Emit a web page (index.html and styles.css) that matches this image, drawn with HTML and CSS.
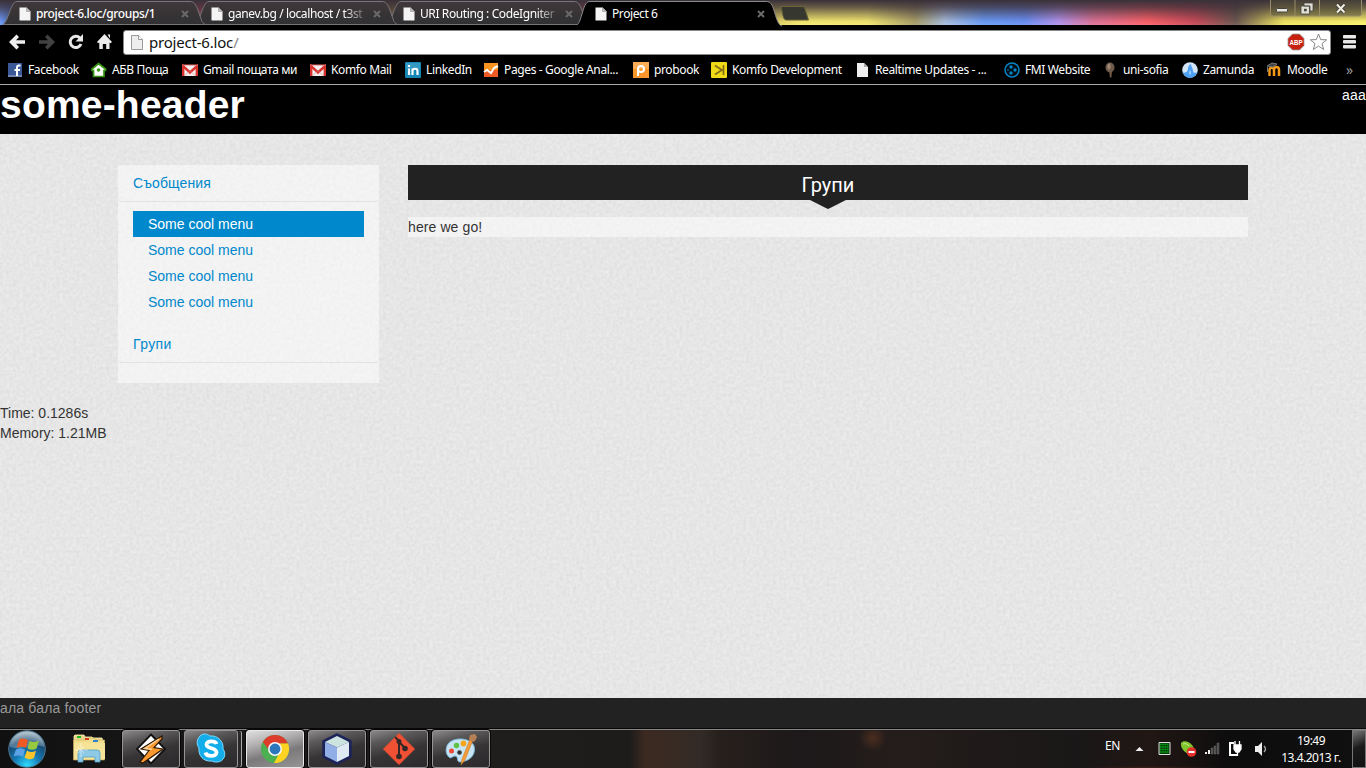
FILE: index.html
```html
<!DOCTYPE html>
<html lang="bg">
<head>
<meta charset="utf-8">
<title>Project 6</title>
<link rel="stylesheet" href="styles.css">
</head>
<body>
<svg class="defs" width="0" height="0">
  <defs>
    <symbol id="doc" viewBox="0 0 12 14"><path d="M.5.5h7l4 4v9H.5z" fill="#f4f4f4"/><path d="M7.500.5v4h4z" fill="#bbb" stroke="#999" stroke-width=".6"/></symbol>
    <symbol id="close" viewBox="0 0 8 8"><path d="M1 1l6 6M7 1L1 7" stroke="#6a6a6a" stroke-width="2"/></symbol>
    <symbol id="gmail" viewBox="0 0 16 16"><path d="M0 3h16v11H0z" fill="#f5eeee"/><path d="M1.200 14V4.200L8 10.500l6.800-6.300V14" fill="none" stroke="#d8322f" stroke-width="2.400"/><path d="M3 13.500l4-4M13 13.500l-4-4" stroke="#d9a5a2" stroke-width=".8"/><path d="M0 3h16" stroke="#e46a66"/></symbol>
  </defs>
</svg>

<div class="browser">
  <div class="tabstrip">
    <svg class="strip-art" width="1366" height="28" viewBox="0 0 1366 28">
      <defs>
        <linearGradient id="glow" x2="1366" gradientUnits="userSpaceOnUse">
          <stop offset="0" stop-color="#6f9dff"/><stop offset=".01" stop-color="#4060a0"/><stop offset=".08" stop-color="#503050"/><stop offset=".147" stop-color="#b04a58"/><stop offset=".2" stop-color="#604040"/><stop offset=".286" stop-color="#8a7a40"/><stop offset=".36" stop-color="#503840"/><stop offset=".43" stop-color="#b04858"/><stop offset=".5" stop-color="#806840"/><stop offset=".585" stop-color="#f8ec70"/><stop offset=".635" stop-color="#f5e870"/><stop offset=".67" stop-color="#a89e68"/><stop offset=".692" stop-color="#a9bfe0"/><stop offset=".72" stop-color="#6a9cf8"/><stop offset=".75" stop-color="#6a90f8"/><stop offset=".775" stop-color="#b394ee"/><stop offset=".8" stop-color="#e0749a"/><stop offset=".84" stop-color="#ff6068"/><stop offset=".875" stop-color="#c84a58"/><stop offset=".905" stop-color="#6c5850"/><stop offset=".94" stop-color="#f4e860"/><stop offset="1" stop-color="#fff56c"/>
        </linearGradient>
        <linearGradient id="shade" x2="0" y2="1"><stop stop-color="#3b3038" stop-opacity="1"/><stop offset=".3" stop-color="#3b3038" stop-opacity=".75"/><stop offset=".85" stop-color="#3b3038" stop-opacity=".05"/><stop offset="1" stop-color="#fff" stop-opacity=".08"/></linearGradient>
        <linearGradient id="tabfill" x2="0" y2="1"><stop stop-color="#40383a"/><stop offset="1" stop-color="#303032"/></linearGradient>
      </defs>
      <path d="M0 0h1366v25H0z" fill="url(#glow)"/>
      <path d="M0 0h1366v25H0z" fill="url(#shade)"/>
      <path d="M0 25h1366v3H0z" fill="#000"/>
      <g fill="url(#tabfill)" stroke="#77747a">
        <path d="M387 24.500c3-2 4-6 6-11s4-12 8-12H574c4 0 6 3 8 9l4 11 3 3z"/>
        <path d="M195 24.500c3-2 4-6 6-11s4-12 8-12H382c4 0 6 3 8 9l4 11 3 3z"/>
        <path d="M3 24.500c3-2 4-6 6-11s4-12 8-12H190c4 0 6 3 8 9l4 11 3 3z"/>
      </g>
      <path d="M575 26c4-1 5-6 7-12 2-6 3-12.500 8-12.500H766c5 0 6 3 8 9s4 15 8 15.500" fill="#000" stroke="#8a878a"/>
      <path d="M0 25h577v3H0z" fill="#000"/>
      <path d="M781 6.500h21c2 0 2.500 1 3.500 4l3 9.500h-22c-2 0-2.500-1-3.500-4z" fill="#36372f" stroke="#6b6338"/>
      <path d="M0 .5h1366" stroke="#39333a"/>
      <path d="M1270.500 0v13c0 2 1 3 3 3h85c2 0 3-1 3-3V0M1295 0v16M1319.500 0v16" fill="#504b38" fill-opacity=".5" stroke="#998d68" stroke-width="1"/>
      <rect x="1276.500" y="8.500" width="11" height="3.500" rx="1" fill="#ece9dc" stroke="#444"/>
      <path d="M1304 3h9v8h-3V6h-6zM1301 6h8.500v8h-8.500z" fill="#e2dfd2" stroke="#444" stroke-width=".8"/><path d="M1304 8.800h2.700v2.500h-2.700z" fill="#444"/>
      <path d="M1337 4.500l7.500 8M1344.500 4.500l-7.500 8" stroke="#333" stroke-width="4"/><path d="M1337 4.500l7.500 8M1344.500 4.500l-7.500 8" stroke="#eeeadd" stroke-width="2.200"/>
    </svg>
    <div class="tabs">
      <div class="tab"><svg class="doc"><use href="#doc"/></svg><span class="tab-title first">project-6.loc/groups/1</span><svg class="x"><use href="#close"/></svg></div>
      <div class="tab"><svg class="doc"><use href="#doc"/></svg><span class="tab-title fade">ganev.bg / localhost / t3st</span><svg class="x"><use href="#close"/></svg></div>
      <div class="tab"><svg class="doc"><use href="#doc"/></svg><span class="tab-title fade">URI Routing : CodeIgniter</span><svg class="x"><use href="#close"/></svg></div>
      <div class="tab"><svg class="doc"><use href="#doc"/></svg><span class="tab-title">Project 6</span><svg class="x"><use href="#close"/></svg></div>
    </div>
  </div>

  <div class="toolbar">
    <svg class="nav" width="123" height="30" viewBox="0 28 123 30">
      <path d="M9 43l7.500-7.500 2.500 2.500-3 3.200H25v3.600h-9l3 3.200-2.500 2.500z" fill="#eee"/>
      <path d="M55 43l-7.500-7.500L45 38l3 3.200h-9v3.600h9L45 48l2.500 2.500z" fill="#414141"/>
      <path d="M80 39.200A5.600 5.600 0 1 0 81 45" fill="none" stroke="#e8e8e8" stroke-width="3"/><path d="M83 35v7.500h-7.500z" fill="#e8e8e8"/>
      <path d="M104.500 35l7.500 8-1.500 1.200-1-.8V50h-3.300v-5h-3.400v5h-3.500v-6.600l-1 .8L97 43zM107.500 35.500h2.500v4z" fill="#eee"/>
    </svg>
    <div class="omnibox">
      <svg class="page" width="12" height="15" viewBox="0 0 12 15"><path d="M.5.500h7l4 4v10H.5z" fill="#eee" stroke="#999"/><path d="M7.500.500v4h4" fill="#fff" stroke="#999"/></svg>
      <span class="url">project-6.loc<i>/</i></span>
      <svg class="omni-icons" width="41" height="20" viewBox="0 0 41 20"><path d="M5.500 2h7L17 6.500v7L12.500 18h-7L1 13.500v-7z" fill="#c8200f" stroke="#999" stroke-width=".8"/><text x="2.500" y="13" class="abp" textLength="13" lengthAdjust="spacingAndGlyphs">ABP</text><path d="M31.500 2l2.200 5.600 6 .2-4.700 3.800 1.700 5.900-5.200-3.400-5.200 3.400 1.700-5.900-4.700-3.800 6-.2z" fill="#fff" stroke="#888"/></svg>
    </div>
    <svg class="menu" width="14" height="14" viewBox="0 0 14 14"><g fill="#e8e8e8"><rect width="13" height="3.600" rx="1"/><rect y="5" width="13" height="3.600" rx="1"/><rect y="10" width="13" height="3.600" rx="1"/></g></svg>
  </div>

  <div class="bookmarks">
    <div class="bm"><svg viewBox="0 0 16 16"><path d="M0 1h14v14H0z" fill="#3b5998"/><path d="M0 13h14v2H0z" fill="#6d84b4"/><path d="M12.500 3.500H11c-1.500 0-2 1-2 2V14M6.500 8h5.500" fill="none" stroke="#fff" stroke-width="2"/></svg><span>Facebook</span></div>
    <div class="bm"><svg viewBox="0 0 16 16"><path d="M7.500 1.500L14.500 7v1.500H13V14.500H2.500V8.500H1V7z" fill="#fff" stroke="#35930f" stroke-width="1.700"/><circle cx="7.500" cy="8" r="1.800" fill="#3a9e18"/></svg><span>АБВ Поща</span></div>
    <div class="bm"><svg><use href="#gmail"/></svg><span>Gmail пощата ми</span></div>
    <div class="bm"><svg><use href="#gmail"/></svg><span>Komfo Mail</span></div>
    <div class="bm"><svg viewBox="0 0 16 16"><rect width="16" height="16" rx="1" fill="#1686b4"/><path d="M1 1h14v6H1z" fill="#50acd0" opacity=".5"/><path d="M4 6.500V13M4 3v2M7.500 13V6.500M7.500 9c.3-3 5-3 5 0v4" fill="none" stroke="#fff" stroke-width="2.200"/></svg><span>LinkedIn</span></div>
    <div class="bm"><svg viewBox="0 0 16 16"><path d="M1 1h14v7H1z" fill="#f7931e"/><path d="M1 8h14v7H1z" fill="#f05a24"/><path d="M1 10l3-2 4 3 3-5 4-2" stroke="#fff" stroke-width="2" fill="none"/></svg><span>Pages - Google Anal...</span></div>
    <div class="bm"><svg viewBox="0 0 16 16"><path d="M0 0h16v16H0z" fill="#f9972d"/><path d="M0 0h16v7H0z" fill="#ffc27b" opacity=".5"/><circle cx="8" cy="7" r="3" fill="none" stroke="#fff" stroke-width="2"/><path d="M5 7v7" stroke="#fff" stroke-width="2"/></svg><span>probook</span></div>
    <div class="bm"><svg viewBox="0 0 16 16"><rect width="16" height="16" rx="1" fill="#f0d916"/><path d="M12.500 3v10M4 3.500L11 8l-7 4.500" fill="none" stroke="#806b16" stroke-width="1.700"/></svg><span>Komfo Development</span></div>
    <div class="bm"><svg viewBox="-3 -1 16 16"><path d="M0 0h7l4 4v10H0z" fill="#eee"/><path d="M7 0v4h4z" fill="#aaa"/></svg><span>Realtime Updates - ...</span></div>
    <div class="bm"><svg viewBox="0 0 16 16"><circle cx="8" cy="8" r="7" fill="#020d15" stroke="#0785c4" stroke-width="1.500"/><g fill="#0785c4"><circle cx="7" cy="5" r="1.700"/><circle cx="11" cy="8" r="1.700"/><circle cx="7" cy="11" r="1.700"/><circle cx="4" cy="8" r=".8"/></g></svg><span>FMI Website</span></div>
    <div class="bm"><svg viewBox="0 0 16 16"><path d="M7 8h3l-.5 7-1.500 1z" fill="#715846"/><ellipse cx="8" cy="5.500" rx="4.500" ry="5" fill="#6f5b4c"/><ellipse cx="7" cy="4.500" rx="1.500" ry="3" fill="#a18b77"/></svg><span>uni-sofia</span></div>
    <div class="bm"><svg viewBox="0 0 16 16"><circle cx="8" cy="8" r="7.800" fill="#d3e5f8"/><path d="M.8 10C2 14 5 15.800 8 15.800s6-1.800 7.200-5.800c-2 1.500-4 1-4.200-1 0-3-2-4-2-7C5 4 7 7 5 9.500c-1 1.500-3 1.500-4.200.5z" fill="#4b9ff5"/><path d="M8 8c1.500 2 1.500 4 0 5-1.500-1-1.500-3 0-5z" fill="#9dcdff"/></svg><span>Zamunda</span></div>
    <div class="bm"><svg viewBox="0 0 16 16"><path d="M3.500 14V8c0-3 4.500-3 4.500 0v6M8 14V8c0-4 5-4 5 0v6" fill="none" stroke="#f29a18" stroke-width="2.500"/><path d="M1 4l5-3 5 1-4 3zM1.500 5v5" fill="#444" stroke="#777"/></svg><span>Moodle</span></div>
    <div class="more">»</div>
  </div>
</div>

<main class="page-body">
  <svg class="paper" width="1366" height="564"><filter id="grain" x="0" y="0" width="100%" height="100%" color-interpolation-filters="sRGB"><feTurbulence type="fractalNoise" baseFrequency=".3" numOctaves="3" seed="4"/><feColorMatrix values=".075 0 0 0 .864 .075 0 0 0 .864 .075 0 0 0 .864 0 0 0 0 1"/></filter><rect width="1366" height="564" filter="url(#grain)"/></svg>
  <header class="site-header"><h1>some-header</h1><span>aaa</span></header>
  <div class="columns">
    <nav class="sidebar">
      <a class="group">Съобщения</a>
      <ul><li class="active">Some cool menu</li><li>Some cool menu</li><li>Some cool menu</li><li>Some cool menu</li></ul>
      <a class="group">Групи</a>
    </nav>
    <section class="content">
      <h3>Групи</h3>
      <p>here we go!</p>
    </section>
  </div>
  <div class="stats">Time: 0.1286s<br>Memory: 1.21MB</div>
</main>
<footer class="site-footer">ала бала footer</footer>

<div class="taskbar">
  <svg class="start" width="48" height="38" viewBox="3 0 48 38">
    <defs><radialGradient id="orb" cx=".5" cy=".95" r=".9"><stop stop-color="#32dcff"/><stop offset=".4" stop-color="#1579b5"/><stop offset=".75" stop-color="#174a72"/><stop offset="1" stop-color="#9ab0bd"/></radialGradient></defs>
    <circle cx="30" cy="19" r="18.300" fill="url(#orb)" stroke="#4d768f"/><path d="M13 17a17 15 0 0 1 34 0c-11-5-22 4-34 0z" fill="#fff" opacity=".25"/>
    <path d="M22 9.500c3-2 6-1 9 .5l-2 8c-3-1.500-6-2-9.500 0z" fill="#ef5a24"/><path d="M32.500 11c3 1.500 6 1.500 9.500-.5l-2.500 8c-3 2-6 1.500-9 0z" fill="#97c93e"/><path d="M19 19.500c3-2 6-1.500 9 0L26 27c-3-2-6-2-9.500-.5z" fill="#5ba3e5"/><path d="M30 20.500c3.500 2 6 2 9 0L37 28c-4 2-6 1.500-9.500-.5z" fill="#fdc52c"/>
  </svg>
  <svg class="explorer" width="34" height="32" viewBox="0 0 34 32"><path d="M2 8V4l1-1h9l1 2h7l1 1h9l1 4z" fill="#e9d48a" stroke="#fff3b5" stroke-width=".8"/><path d="M1.500 8h13l2-2h6l1 2h9v20h-31z" fill="#f3de8c" stroke="#c9ae5d" stroke-width=".6"/><path d="M2 11h31v16H2z" fill="#f5e398"/><path d="M5 4h4v2H5z" fill="#16b824"/><path d="M13 6h4v2h-4z" fill="#d33a24"/><path d="M21 8h5v2h-5z" fill="#2d83ce"/><path d="M6 30V21q0-3 3-3h16q3 0 3 3v9h-5v-5H11v5z" fill="#8ecae6" stroke="#54a0c5" stroke-width=".8"/><path d="M9 11v14M3 18h13M6 15l6 6M12 15l-6 6" stroke="#fff" stroke-width=".8" opacity=".6"/></svg>
  <div class="apps">
    <div class="app"><svg viewBox="0 0 32 32"><path d="M16 1.500L30 16 16 30.500 2 16z" fill="#fff" stroke="#111" stroke-width="1.800"/><path d="M27 3L6 16l8 1.500L5 29l3 1 20-14-9-1.500L27 6z" fill="#f9982e" stroke="#2a1805" stroke-width="1.200"/><path d="M24 6L10 15.500l7 .8" fill="none" stroke="#ffd29b" stroke-width="1.500"/></svg></div>
    <div class="app stacked"><svg viewBox="0 0 32 32"><path d="M5 3c4-4 9-1 10 0 8-1 14 6 13 13 4 5 1 13-6 13-2 0-4 0-5-1C8 29 3 22 4 15 1 11 2 6 5 3z" fill="#13aeea" stroke="#7edaff"/><path d="M21.500 11c-1-3-10-4-10 .5 0 5 10 2.500 10 8 0 4.500-10 4.500-11 0" fill="none" stroke="#fff" stroke-width="3.800"/></svg></div>
    <div class="app current"><svg viewBox="0 0 32 32"><circle cx="16" cy="16" r="14" fill="#4caf50"/><path d="M3.900 9A14 14 0 0 1 29 10.500H16A6 6 0 0 0 10 17z" fill="#dd3b2b"/><path d="M29 10.500A14 14 0 0 1 15 30l6-11c2-3 0-6-2-8.500z" fill="#ffd321"/><circle cx="16" cy="16" r="6.200" fill="#2b76bd" stroke="#f5f5f5" stroke-width="1.600"/></svg></div>
    <div class="app"><svg viewBox="0 0 32 32"><path d="M16 1l14 7v16l-14 7-14-7V8z" fill="#1d2459" stroke="#1d2459" stroke-width="1.500" stroke-linejoin="round"/><path d="M16 3l12 6-12 5.500L4 9z" fill="#cce3df"/><path d="M4 9l12 5.500V29L4 23z" fill="#91aee6"/><path d="M28 9l-12 5.500V29l12-6z" fill="#dfeaf2"/></svg></div>
    <div class="app"><svg viewBox="0 0 32 32"><path d="M16 .5L31.500 16 16 31.500.5 16z" fill="#f05033" stroke="#f05033" stroke-linejoin="round"/><path d="M12 4l4 4v15M16 9l6 6" fill="none" stroke="#332827" stroke-width="2"/><circle cx="16" cy="8.500" r="2.500" fill="#332827"/><circle cx="16" cy="23.500" r="2.800" fill="#332827"/><circle cx="22" cy="15.500" r="2.800" fill="#332827"/></svg></div>
    <div class="app"><svg viewBox="0 0 32 32"><path d="M3 11C8 4 25 4 29 13c2 8-3 15-14 16-4 0-1-6-5-6-3 0-4 4-7 0-3-4-2-9 0-12z" fill="#c6e4f4" stroke="#7eb9da"/><circle cx="14.500" cy="19.500" r="2.300" fill="#333"/><circle cx="6.500" cy="18" r="2.500" fill="#ed4b37"/><circle cx="11.500" cy="12.500" r="2.700" fill="#5fc244"/><circle cx="18.500" cy="10.500" r="2.900" fill="#f9a51b"/><path d="M28 7l-8 20-4 5 1-6 8-20z" fill="#f49b38" stroke="#c87922" stroke-width=".5"/><path d="M24 6l1-4 5-1 2 3-2 4-3 1z" fill="#b58054"/></svg></div>
  </div>
  <div class="tray">
    <span class="lang">EN</span>
    <svg class="tray-icons" width="136" height="22" viewBox="1135 738 136 22">
      <path d="M1136.500 751l4-4 4 4z" fill="#eee"/>
      <path d="M1160 742.500h11v12h-11z" fill="#063d0a" stroke="#ddd"/><path d="M1161 744.500h9M1161 747h9M1161 749.500h9M1161 752h9" stroke="#08a018" stroke-width="1.700" stroke-dasharray="1.600 .6"/>
      <path d="M1182 743c2-3 8-2 11 2s3 9 1 10c-4 1-13-5-12-12z" fill="#80c62f"/><path d="M1184 744c2-1 5 0 6 2" stroke="#c9ee95" fill="none"/><circle cx="1192.500" cy="752" r="4.800" fill="#e4302b"/><path d="M1189.500 752h6" stroke="#fff" stroke-width="2"/>
      <path d="M1206 752h2v2h-2zM1209 750h2v4h-2z" fill="#eee"/><path d="M1212 748h2v6h-2zM1215 746h2v8h-2zM1218 743h2v11h-2z" fill="#4a4a4a" stroke="#777" stroke-width=".4"/>
      <path d="M1235 743h-4v12h8" fill="none" stroke="#fff" stroke-width="2"/><path d="M1235 745h7v4l-2 3h-3l-2-3zM1236 741v4M1240.500 741v4M1238.500 751v5" fill="#fff" stroke="#fff" stroke-width="1.300"/>
      <path d="M1256 746h3l4-4v14l-4-4h-3z" fill="#eee"/><path d="M1265 746q3 3 0 6" fill="none" stroke="#aaa" stroke-width="1.300"/>
    </svg>
    <div class="clock">19:49<br>13.4.2013 г.</div>
    <div class="peek"></div>
  </div>
</div>
</body>
</html>
```
FILE: styles.css
```css
* { box-sizing: border-box; }
body { margin: 0; width: 1366px; height: 768px; overflow: hidden; display: flex; flex-direction: column; font: 14px/20px "Liberation Sans", Arial, sans-serif; color: #333; background: #e6e6e6; }
svg { display: block; flex: none; }
.defs { position: absolute; }
.browser { height: 85px; flex: none; background: #000; color: #fff; border-bottom: 1px solid #aaa; font-family: "Noto Sans", sans-serif; display: flex; flex-direction: column; }
.tabstrip { position: relative; height: 28px; flex: none; }
.strip-art { position: absolute; left: 0; top: 0; }
.tabs { position: relative; display: flex; padding-left: 19px; height: 27px; }
.tab { width: 192px; display: flex; align-items: center; }
.doc { width: 12px; height: 14px; margin-right: 5px; }
.x { width: 8px; height: 8px; margin-left: 9px; }
.tab-title { width: 136px; overflow: hidden; white-space: nowrap; font-size: 12px; letter-spacing: -.4px; line-height: 18px; }
.first { font-weight: 500; letter-spacing: -.36px; }
.fade { -webkit-mask-image: linear-gradient(90deg, #000 85%, transparent 104%); mask-image: linear-gradient(90deg, #000 85%, transparent 104%); }
.toolbar { height: 28px; flex: none; display: flex; align-items: center; }
.omnibox { width: 1208px; height: 25px; background: #fff; border: 1px solid #888; border-radius: 3px; display: flex; align-items: center; padding: 0 2px 0 7px; }
.url { flex: 1; margin-left: 6px; color: #111; font-size: 15px; letter-spacing: -.2px; line-height: 20px; }
.url i { color: #888; font-style: normal; }
.abp { font: bold 8px "Liberation Sans", sans-serif; fill: #fff; }
.menu { margin-left: 12px; }
.bookmarks { flex: 1; display: grid; grid-template-columns: 83px 91px 128px 95px 78px 150px 78px 143px 150px 98px 80px 84px 80px 16px; padding-left: 8px; align-items: center; font-size: 12px; letter-spacing: -.37px; line-height: 16px; }
.bm { display: flex; align-items: center; gap: 5px; white-space: nowrap; }
.bm:first-child { gap: 4px; }
.bm svg { width: 16px; height: 16px; }
.more { color: #999; font-size: 14px; }

.page-body { position: relative; height: 613px; flex: none; }
.paper { position: absolute; left: 0; top: 49px; z-index: -1; }
.site-header { height: 49px; background: #000; color: #fff; display: flex; justify-content: space-between; align-items: flex-start; }
.site-header span { letter-spacing: .2px; }
h1 { margin: 0; font-size: 39px; line-height: 40px; letter-spacing: .2px; }
.columns { display: flex; align-items: flex-start; gap: 29px; padding: 31px 118px 0; }
.sidebar { width: 261px; height: 218px; background: rgba(255,255,255,.5); }
.group { display: block; height: 37px; padding: 8px 15px; color: #08c; border-bottom: 1px solid #e2e2e2; border-radius: 4px; letter-spacing: .1px; }
.sidebar ul { list-style: none; margin: 9px 15px 11px; padding: 0; }
.sidebar ul + .group { letter-spacing: .4px; }
.sidebar li { height: 26px; padding: 3px 15px; color: #08c; }
.sidebar .active { background: #08c; color: #fff; }
.content { width: 840px; }
h3 { position: relative; margin: 0 0 17px; height: 35px; background: #222; color: #fff; text-align: center; font: 400 20px/40px Roboto, sans-serif; }
h3::after { content: ""; position: absolute; left: 402px; top: 35px; width: 36px; height: 9px; background: #222; clip-path: polygon(0 0, 100% 0, 56% 90%, 50% 100%, 44% 90%); }
.content p { margin: 0; height: 20px; background: rgba(255,255,255,.5); letter-spacing: .1px; }
.stats { margin-top: 20px; }
.site-footer { height: 31px; flex: none; background: #222; color: #999; letter-spacing: .17px; }

.taskbar { height: 39px; flex: none; display: flex; border-top: 1px solid #858585; box-shadow: 0 -1px #080808; color: #fff; font: 12px/17px "Noto Sans", sans-serif; background: radial-gradient(circle at 873px 8px, #4b2d1f, transparent 14px), radial-gradient(ellipse at 1150px 38px, #3a2018, transparent 70px), linear-gradient(90deg, #101010 0, #151515 120px, #201e1d 490px, #1e1c1b 630px, #3c2a21 645px, #332b26 700px, #261f1c 720px, #1d191a 800px, #241d1b 900px, #191717 1080px, #211714 1150px, #0d0d0d 1230px, #101010); }
.start { width: 48px; height: 38px; }
.explorer { margin: 2px 16px 0 24px; }
.apps { display: flex; gap: 4px; }
.app { width: 58px; height: 38px; border: 1px solid #969494; border-radius: 3px; background: linear-gradient(165deg, #8b8989 0, #5a5859 25%, #363435 55%, #2b292b); display: grid; place-items: center; box-shadow: 0 0 0 1px #080808; }
.app svg { width: 32px; height: 32px; }
.app:nth-child(3) svg, .app:nth-child(1) svg, .app:nth-child(2) svg { margin-right: 1px; }
.stacked { width: 54px; margin-right: 4px; box-shadow: 4px 0 0 -1px #292729, 5px 0 0 -1px #aaa; }
.current { border-color: #e8e8e8; background: linear-gradient(165deg, #e0dfdf 0, #b4b2b2 30%, #7b7979 60%, #969494); }
.tray { margin-left: auto; display: flex; align-items: flex-start; }
.lang { padding-top: 7px; margin-right: 14px; letter-spacing: -.4px; }
.tray-icons { margin-top: 8px; }
.clock { width: 82px; padding-top: 2px; text-align: center; letter-spacing: -.5px; }
.peek { width: 14px; height: 38px; border: 1px solid #777; background: linear-gradient(155deg, #777, #1b1b1b 45%, #111); }
```
